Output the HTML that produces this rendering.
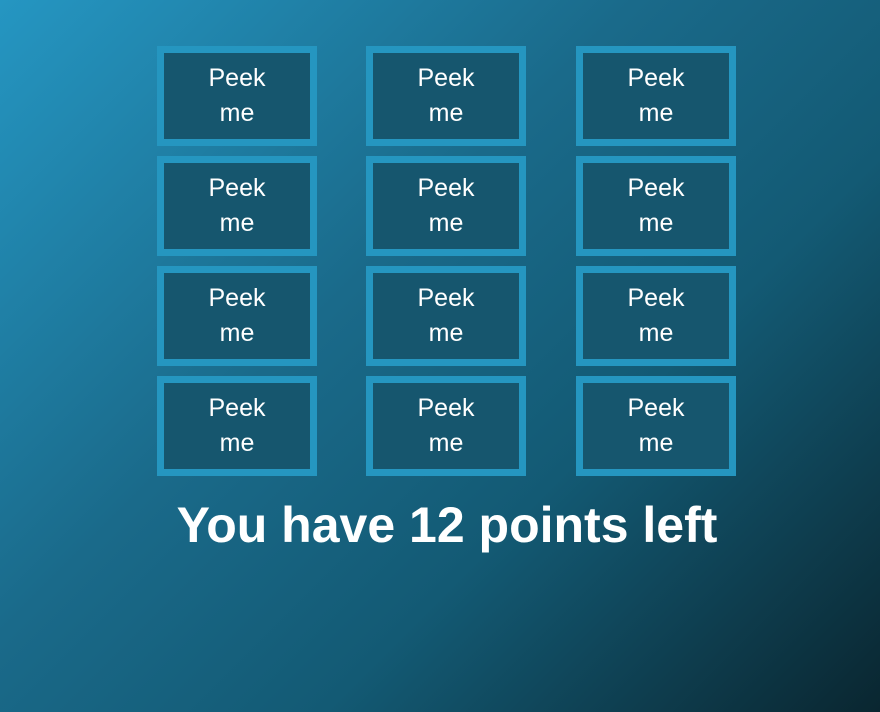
<!DOCTYPE html>
<html><head><style>
html,body{margin:0;width:880px;height:712px;overflow:hidden}
body{background:linear-gradient(135deg,#2596c2 0%,#1a6a8a 40%,#135a74 65%,#0a2630 100%);font-family:"Liberation Sans",sans-serif;position:relative}
.b{position:absolute;width:146px;height:86px;border:7px solid #2596c0;background:#16566e;color:#fff;font-size:25px;line-height:35px;text-align:center;display:flex;align-items:center;justify-content:center}
h1{position:absolute;left:0;width:894px;top:496px;margin:0;text-align:center;color:#fff;font-size:50px;font-weight:bold;line-height:58px}
</style></head><body>
<div class="b" style="left:157px;top:46px">Peek<br>me</div>
<div class="b" style="left:366px;top:46px">Peek<br>me</div>
<div class="b" style="left:576px;top:46px">Peek<br>me</div>
<div class="b" style="left:157px;top:156px">Peek<br>me</div>
<div class="b" style="left:366px;top:156px">Peek<br>me</div>
<div class="b" style="left:576px;top:156px">Peek<br>me</div>
<div class="b" style="left:157px;top:266px">Peek<br>me</div>
<div class="b" style="left:366px;top:266px">Peek<br>me</div>
<div class="b" style="left:576px;top:266px">Peek<br>me</div>
<div class="b" style="left:157px;top:376px">Peek<br>me</div>
<div class="b" style="left:366px;top:376px">Peek<br>me</div>
<div class="b" style="left:576px;top:376px">Peek<br>me</div>
<h1>You have 12 points left</h1>
</body></html>
